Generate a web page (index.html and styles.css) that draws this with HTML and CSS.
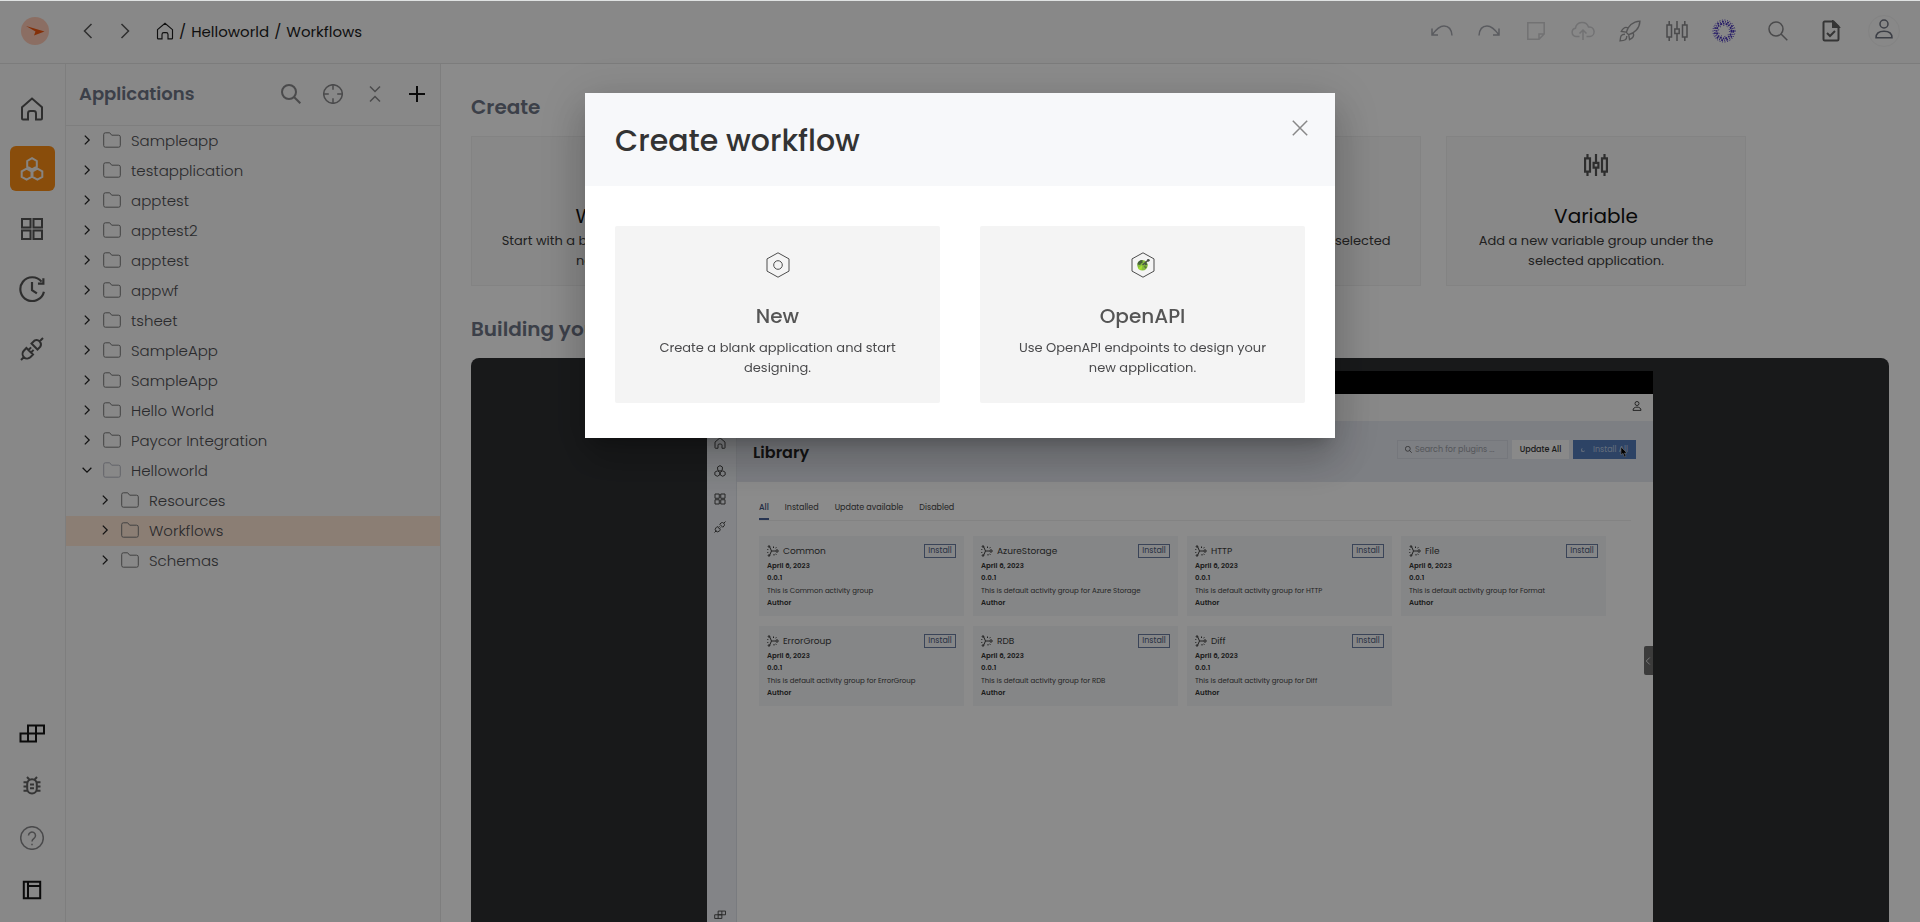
FILE: index.html
```html
<!DOCTYPE html>
<html lang="en">
<head>
<meta charset="utf-8">
<title>Create workflow</title>
<link rel="stylesheet" href="styles.css">
</head>
<body>
<svg class="defs" aria-hidden="true">
  <symbol id="home" viewBox="0 0 24 24"><path d="M2 10.200 12 1.600l10 8.600V21.500a1 1 0 0 1-1 1h-5v-6a2.400 2.400 0 0 0-2.400-2.400h-3.200A2.400 2.400 0 0 0 8 16.500v6H3a1 1 0 0 1-1-1z"/></symbol>
  <symbol id="hexes" viewBox="0 0 24 24"><path d="M12 1.200 16.800 4v5.600L12 12.400 7.200 9.600V4zM6.600 11.600l4.900 2.800v5.400l-4.900 2.800-4.900-2.800v-5.400zM17.400 11.600l4.900 2.800v5.400l-4.900 2.800-4.900-2.800v-5.400z"/></symbol>
  <symbol id="grid" viewBox="0 0 24 24"><path d="M2 2h8.500v8.500H2zM13.500 2H22v8.500h-8.500zM2 13.500h8.500V22H2zM13.500 13.500H22V22h-8.500z"/></symbol>
  <symbol id="history" viewBox="0 0 24 24"><path d="M20.800 5.200A11 11 0 1 0 23 14.500M12 5.500V13l4.500 3M22.500 2v5h-5"/></symbol>
  <symbol id="plug" viewBox="0 0 24 24"><path d="M1 23l3.500-3.500M19.500 4.500 23 1M11.500 6.500l6 6 2.800-2.800a4.400 4.400 0 0 0-6-6zM3.800 13.800 6.400 11l6.600 6.600-2.700 2.700a4.600 4.600 0 0 1-6.500-6.500zM8.500 13l2.600-2.600M11 15.500l2.600-2.600"/></symbol>
  <symbol id="blocks" viewBox="0 0 26 20"><path d="M9 1.500h16v8H9zM1.500 9.500h15.500v8H1.500zM17 1.500v8M9 9.500v8"/></symbol>
  <symbol id="bug" viewBox="0 0 20 20"><path d="M10 3.200c3 0 4.800 2.200 4.800 4.800v4.500c0 3-2 5-4.800 5s-4.800-2-4.800-5V8c0-2.600 1.800-4.800 4.800-4.800zM5 1l2.500 2.700M15 1l-2.500 2.700M1.500 6.300h4M1.500 10.500h4M1.500 14.700h4M14.500 6.300h4M14.500 10.500h4M14.500 14.700h4M8 8.500h4M8 12.300h4"/></symbol>
  <symbol id="help" viewBox="0 0 24 24"><circle cx="12" cy="12" r="11.300"/><path d="M8.500 9.500a3.500 3.500 0 1 1 5.500 2.900c-1.300.9-2 1.500-2 3M12 17.700v1.500"/></symbol>
  <symbol id="layout" viewBox="0 0 20 20"><path d="M1.800 1.800h16.400v16.400H1.800zM6 1.800v16.400M6 6h12.200"/></symbol>
  <symbol id="chev-r" viewBox="0 0 10 16"><path d="m1.500 1 7 7-7 7"/></symbol>
  <symbol id="chev-l" viewBox="0 0 10 16"><path d="m8.500 1-7 7 7 7"/></symbol>
  <symbol id="folder" viewBox="0 0 18 16"><path d="M.7 13.500v-11A1.700 1.700 0 0 1 2.400.8h4.300l2 2.400h6.900a1.700 1.700 0 0 1 1.700 1.700v8.600a1.700 1.700 0 0 1-1.700 1.700H2.400a1.700 1.700 0 0 1-1.700-1.700z"/></symbol>
  <symbol id="search" viewBox="0 0 20 20"><circle cx="8" cy="8" r="7"/><path d="m13 13 6.300 6.300"/></symbol>
  <symbol id="target" viewBox="0 0 20 20"><circle cx="10" cy="10" r="9.300"/><path d="M10 .8v5M10 14.200v5M.8 10h5M14.200 10h5"/></symbol>
  <symbol id="collapse" viewBox="0 0 12 18"><path d="m1 1.500 5 5 5-5M1 16.500l5-5 5 5"/></symbol>
  <symbol id="plus" viewBox="0 0 16 16"><path d="M8 0v16M0 8h16"/></symbol>
  <symbol id="undo" viewBox="0 0 22 12"><path d="M1 3.500V10h6M1 10C6 3 9 1 13 1s7.500 3 8 9.500"/></symbol>
  <symbol id="redo" viewBox="0 0 22 12"><path d="M21 3.500V10h-6M21 10C16 3 13 1 9 1S1.500 4 1 10.500"/></symbol>
  <symbol id="note" viewBox="0 0 18 18"><path d="M.8.8h16.400V12L12 17.200H.8zM12 17V12h5"/></symbol>
  <symbol id="cloud" viewBox="0 0 24 20"><path d="M8.500 15.500H5a4.200 4.200 0 0 1-.5-8.300A6.700 6.700 0 0 1 17.500 6a4.800 4.800 0 0 1 1.500 9.500h-3.500M12 19V9M8.500 12.500 12 9l3.500 3.500"/></symbol>
  <symbol id="rocket" viewBox="0 0 24 24"><path d="M8 13.500C9.500 7 15 1.500 22.800 1.200 22.500 9 17 14.500 10.500 16zM9.800 8.500C6.500 7 4.500 8.500 2.500 12.500l5.300.8M15.500 14.200c1.500 3.300 0 5.300-4 7.300l-.8-5.300M6.500 15.500c-4 0-5 2-5.300 7.300 5.300-.3 7.300-1.300 7.300-5.300"/></symbol>
  <symbol id="sliders" viewBox="0 0 22 20"><path d="M1 4h4.500v12H1zM3.200 0v4M3.200 16v4M8.800 8h4.400v4.400H8.800zM11 0v8M11 12.400V20M16.500 4H21v12h-4.500zM18.800 0v4M18.800 16v4"/></symbol>
  <symbol id="ring" viewBox="0 0 24 24"><circle cx="12" cy="12" r="11" stroke-width="1" stroke-dasharray="1 1.600"/><circle cx="12" cy="12" r="9.300" stroke-width="1.700" stroke-dasharray="1.700 1.300 .8 1.400"/><circle cx="12" cy="12" r="7.400" stroke-width="1.800" stroke-dasharray="1.500 1.200 2 .9"/><circle cx="12" cy="12" r="5.500" stroke-width="1" stroke-dasharray="1 2.500"/></symbol>
  <symbol id="filecheck" viewBox="0 0 18 22"><path d="M1.500 2.700v16.600a1.200 1.200 0 0 0 1.200 1.200h12.600a1.200 1.200 0 0 0 1.200-1.200V6.500l-5-5H2.700a1.200 1.200 0 0 0-1.200 1.200zM5 13l3 3 5-5"/><path class="solid" d="M11 1.500v5.500h5.500z"/></symbol>
  <symbol id="user" viewBox="0 0 18 20"><circle cx="9" cy="5" r="4"/><path d="M1 18.800c0-4.300 3.300-6.600 8-6.600s8 2.300 8 6.600z"/></symbol>
  <symbol id="hexnut" viewBox="0 0 24 26"><path d="M12 .8 23 6.900v12.200L12 25.200 1 19.100V6.900z"/><circle cx="12" cy="13" r="4.300"/></symbol>
  <symbol id="hexapi" viewBox="0 0 24 26"><path d="M12 .8 23 6.900v12.200L12 25.200 1 19.100V6.900z"/><g stroke="none"><circle cx="11.500" cy="13.200" r="5.200" fill="#86bd3c"/><path d="M6.300 12.500A5.200 5.200 0 0 1 11.500 8v3a2.200 2.200 0 0 0-2.200 2zM14.500 9.500l2 3.200-3 .7z" fill="#46603a"/><path d="m8 15.500 3.500-2.500-1 5-3.500-1z" fill="#a4e02c"/><path d="m12.500 14 3.500.8-1.500 2z" fill="#56733c"/><circle cx="17.300" cy="8.300" r="1.400" fill="#4a4f4a"/></g><path d="m11.500 13 6-5" stroke="#4a4f4a" stroke-width="1.300"/></symbol>
  <symbol id="close" viewBox="0 0 16 16"><path d="m.8.8 14.400 14.400M15.200.8.800 15.200"/></symbol>
  <symbol id="nodes" viewBox="0 0 12 12"><path d="M2.500 1.500 4.500 6l-2 4.500M4.500 6h4"/><circle cx="10" cy="6" r="1.200"/><circle cx="2" cy="1.500" r=".8"/><circle cx="2" cy="10.500" r=".8"/><path d="M6.500 1.500v1.500M7 9v1.500M.8 4v1M.8 7v1M9.500 2.500l-1 .5M9.500 9.500l-1-.5"/></symbol>
</svg>

<div class="app">
  <header class="topbar">
    <svg class="logo" viewBox="0 0 28 28" role="img" aria-label="Logo"><circle cx="14" cy="14" r="14" fill="#fdc9b4"/><path d="M5 9l18.500 5.500-10.500 4 1.500-4z" fill="#f0560f"/></svg>
    <nav class="crumbs" aria-label="Breadcrumb">
      <button class="ico step" aria-label="Back"><svg class="i-chev"><use href="#chev-l"/></svg></button>
      <button class="ico step" aria-label="Forward"><svg class="i-chev"><use href="#chev-r"/></svg></button>
      <a href="#" class="crumb-home" aria-label="Home"><svg class="i18"><use href="#home"/></svg></a>
      <span>/</span><a href="#">Helloworld</a><span>/</span><a href="#">Workflows</a>
    </nav>
    <div class="tools">
      <div class="edit-tools">
        <button class="ico faint" aria-label="Undo"><svg class="i-wide"><use href="#undo"/></svg></button>
        <button class="ico faint" aria-label="Redo"><svg class="i-wide"><use href="#redo"/></svg></button>
        <button class="ico fainter" aria-label="Note"><svg class="i18"><use href="#note"/></svg></button>
        <button class="ico fainter" aria-label="Publish"><svg class="i24"><use href="#cloud"/></svg></button>
        <button class="ico grey" aria-label="Deploy"><svg class="i22"><use href="#rocket"/></svg></button>
        <button class="ico mid" aria-label="Variables"><svg class="i22"><use href="#sliders"/></svg></button>
        <button class="ico violet" aria-label="Assistant"><svg class="i24"><use href="#ring"/></svg></button>
      </div>
      <div class="user-tools">
        <button class="ico mid" aria-label="Search"><svg class="i20"><use href="#search"/></svg></button>
        <button class="ico bold" aria-label="Tasks"><svg class="i22"><use href="#filecheck"/></svg></button>
        <button class="ico slate" aria-label="Account"><svg class="i20"><use href="#user"/></svg></button>
      </div>
    </div>
  </header>

  <div class="body">
    <nav class="rail" aria-label="Main">
      <div class="rail-top">
        <a href="#" aria-label="Home"><svg class="i24"><use href="#home"/></svg></a>
        <a href="#" class="active" aria-label="Applications"><svg class="i24"><use href="#hexes"/></svg></a>
        <a href="#" aria-label="Library"><svg class="i24"><use href="#grid"/></svg></a>
        <a href="#" aria-label="History"><svg class="i26"><use href="#history"/></svg></a>
        <a href="#" aria-label="Connections"><svg class="i24"><use href="#plug"/></svg></a>
      </div>
      <div class="rail-bottom">
        <button class="ico black" aria-label="Blocks"><svg class="i26"><use href="#blocks"/></svg></button>
        <button class="ico bold" aria-label="Debug"><svg class="i20"><use href="#bug"/></svg></button>
        <button class="ico mid" aria-label="Help"><svg class="i24"><use href="#help"/></svg></button>
        <button class="ico black" aria-label="Layout"><svg class="i20"><use href="#layout"/></svg></button>
      </div>
    </nav>

    <aside class="panel">
      <div class="panel-head">
        <h2>Applications</h2>
        <div class="panel-tools">
          <button class="ico glass" aria-label="Search"><svg class="i20"><use href="#search"/></svg></button>
          <button class="ico mid" aria-label="Locate"><svg class="i20"><use href="#target"/></svg></button>
          <button class="ico mid" aria-label="Collapse"><svg class="i18"><use href="#collapse"/></svg></button>
          <button class="ico black" aria-label="Add"><svg class="i16"><use href="#plus"/></svg></button>
        </div>
      </div>
      <ul class="tree">
        <li><svg class="arrow"><use href="#chev-r"/></svg><svg class="folder"><use href="#folder"/></svg>Sampleapp</li>
        <li><svg class="arrow"><use href="#chev-r"/></svg><svg class="folder"><use href="#folder"/></svg>testapplication</li>
        <li><svg class="arrow"><use href="#chev-r"/></svg><svg class="folder"><use href="#folder"/></svg>apptest</li>
        <li><svg class="arrow"><use href="#chev-r"/></svg><svg class="folder"><use href="#folder"/></svg>apptest2</li>
        <li><svg class="arrow"><use href="#chev-r"/></svg><svg class="folder"><use href="#folder"/></svg>apptest</li>
        <li><svg class="arrow"><use href="#chev-r"/></svg><svg class="folder"><use href="#folder"/></svg>appwf</li>
        <li><svg class="arrow"><use href="#chev-r"/></svg><svg class="folder"><use href="#folder"/></svg>tsheet</li>
        <li><svg class="arrow"><use href="#chev-r"/></svg><svg class="folder"><use href="#folder"/></svg>SampleApp</li>
        <li><svg class="arrow"><use href="#chev-r"/></svg><svg class="folder"><use href="#folder"/></svg>SampleApp</li>
        <li><svg class="arrow"><use href="#chev-r"/></svg><svg class="folder"><use href="#folder"/></svg>Hello World</li>
        <li><svg class="arrow"><use href="#chev-r"/></svg><svg class="folder"><use href="#folder"/></svg>Paycor Integration</li>
        <li class="open"><svg class="arrow"><use href="#chev-r"/></svg><svg class="folder"><use href="#folder"/></svg>Helloworld</li>
        <li class="child"><svg class="arrow"><use href="#chev-r"/></svg><svg class="folder"><use href="#folder"/></svg>Resources</li>
        <li class="child selected"><svg class="arrow"><use href="#chev-r"/></svg><svg class="folder"><use href="#folder"/></svg>Workflows</li>
        <li class="child"><svg class="arrow"><use href="#chev-r"/></svg><svg class="folder"><use href="#folder"/></svg>Schemas</li>
      </ul>
    </aside>

    <main class="main">
      <h2>Create</h2>
      <div class="create">
        <button class="tile"><svg class="i24"><use href="#hexnut"/></svg><strong>Workflow</strong><span>Start with a blank canvas to create a<br>new workflow.</span></button>
        <div class="tile"></div>
        <button class="tile"><svg class="i24"><use href="#folder"/></svg><strong>Schema</strong><span>Add new schema under the selected<br>application.</span></button>
        <button class="tile"><svg class="i24"><use href="#sliders"/></svg><strong>Variable</strong><span>Add a new variable group under the<br>selected application.</span></button>
      </div>
      <h2>Building your workflow</h2>
      <div class="video">
        <div class="screen">
          <div class="screen-black"></div>
          <div class="screen-top"><svg class="i10"><use href="#user"/></svg></div>
          <div class="screen-body">
            <div class="mini-rail">
              <svg class="i12"><use href="#home"/></svg>
              <svg class="i12"><use href="#hexes"/></svg>
              <svg class="i12"><use href="#grid"/></svg>
              <svg class="i12"><use href="#plug"/></svg>
              <svg class="i12 last"><use href="#blocks"/></svg>
            </div>
            <div class="lib">
              <div class="lib-head">
                <h3>Library</h3>
                <label class="mini-search"><svg class="i7"><use href="#search"/></svg><input type="text" placeholder="Search for plugins ..." aria-label="Search for plugins"></label>
                <button class="update">Update All</button>
                <button class="install-all"><i></i>Install All<svg class="cursor" viewBox="0 0 8 10"><path d="M1 0v8l2-1.700L4.500 10 6 9.300 4.500 6H7z" fill="#000" stroke="#ddd" stroke-width=".5"/></svg></button>
              </div>
              <div class="tabs"><a href="#" class="on">All</a><a href="#">Installed</a><a href="#">Update available</a><a href="#">Disabled</a></div>
              <div class="plugins">
                <article><header><svg class="i12"><use href="#nodes"/></svg><h4>Common</h4><button>Install</button></header><b>April 6, 2023</b><b>0.0.1</b><p>This is Common activity group</p><b>Author</b></article>
                <article><header><svg class="i12"><use href="#nodes"/></svg><h4>AzureStorage</h4><button>Install</button></header><b>April 6, 2023</b><b>0.0.1</b><p>This is default activity group for Azure Storage</p><b>Author</b></article>
                <article><header><svg class="i12"><use href="#nodes"/></svg><h4>HTTP</h4><button>Install</button></header><b>April 6, 2023</b><b>0.0.1</b><p>This is default activity group for HTTP</p><b>Author</b></article>
                <article><header><svg class="i12"><use href="#nodes"/></svg><h4>File</h4><button>Install</button></header><b>April 6, 2023</b><b>0.0.1</b><p>This is default activity group for Format</p><b>Author</b></article>
                <article><header><svg class="i12"><use href="#nodes"/></svg><h4>ErrorGroup</h4><button>Install</button></header><b>April 6, 2023</b><b>0.0.1</b><p>This is default activity group for ErrorGroup</p><b>Author</b></article>
                <article><header><svg class="i12"><use href="#nodes"/></svg><h4>RDB</h4><button>Install</button></header><b>April 6, 2023</b><b>0.0.1</b><p>This is default activity group for RDB</p><b>Author</b></article>
                <article><header><svg class="i12"><use href="#nodes"/></svg><h4>Diff</h4><button>Install</button></header><b>April 6, 2023</b><b>0.0.1</b><p>This is default activity group for Diff</p><b>Author</b></article>
              </div>
            </div>
            <button class="drawer" aria-label="Expand"><svg class="i8"><use href="#chev-l"/></svg></button>
          </div>
        </div>
      </div>
    </main>
  </div>
</div>

<div class="overlay">
  <section class="modal" role="dialog" aria-labelledby="dlg">
    <header>
      <h1 id="dlg">Create workflow</h1>
      <button class="ico close" aria-label="Close"><svg class="i16"><use href="#close"/></svg></button>
    </header>
    <div class="choices">
      <button class="choice"><svg class="i26"><use href="#hexnut"/></svg><strong>New</strong><span>Create a blank application and start<br>designing.</span></button>
      <button class="choice"><svg class="i26"><use href="#hexapi"/></svg><strong>OpenAPI</strong><span>Use OpenAPI endpoints to design your<br>new application.</span></button>
    </div>
  </section>
</div>
</body>
</html>
```
FILE: styles.css
```css
* { box-sizing: border-box; }
html, body { height: 100%; }
body {
  margin: 0;
  border-top: 1px solid #dfe2e2;
  overflow: hidden;
  font-family: Poppins, Inter, "Open Sans", sans-serif;
  font-size: 15px;
  color: #4e4e52;
  background: #fdfdfd;
}
h1, h2, h3, h4, p, ul { margin: 0; padding: 0; }
h2 { font-size: 20px; line-height: 30px; font-weight: 600; color: #6e7586; }
a { color: inherit; text-decoration: none; }
button, input { font: inherit; color: inherit; border: 0; background: none; padding: 0; }
.defs { position: absolute; width: 0; height: 0; }

svg { fill: none; stroke: currentColor; stroke-width: 1.5; flex: none; display: block; }
.logo path, .logo circle { stroke: none; }
.solid { fill: currentColor; }
.i7 { width: 7px; height: 7px; }
.i8 { width: 8px; height: 8px; }
.i10 { width: 10px; height: 10px; }
.i12 { width: 12px; height: 12px; }
.i16 { width: 16px; height: 16px; }
.i18 { width: 18px; height: 18px; }
.i20 { width: 20px; height: 20px; }
.i22 { width: 22px; height: 22px; }
.i24 { width: 24px; height: 24px; }
.i26 { width: 26px; height: 26px; }
.i-wide { width: 22px; height: 12px; }
.i-chev { width: 10px; height: 16px; }

.ico { width: 32px; height: 32px; display: grid; place-items: center; }
.fainter { color: #cfcfd2; }
.faint { color: #a4a6ae; }
.grey { color: #9a9a9c; }
.mid { color: #88888a; }
.bold { color: #626262; }
.bold svg { stroke-width: 2; }
.slate { color: #6e7380; border: 1px solid #eeeeee; border-radius: 50%; padding-bottom: 4px; }
.violet { color: #4632bc; }
.black { color: #141414; }
.black svg { stroke-width: 2; }
.glass { color: #88888a; }
.glass svg { stroke-width: 2; }

.app { height: 100%; display: flex; flex-direction: column; }
.topbar {
  height: 63px;
  flex: none;
  display: flex;
  align-items: center;
  padding: 0 20px 2px 21px;
  background: #f7f7f7;
  border-bottom: 1px solid #e2e2e2;
}
.logo { width: 28px; height: 28px; }
.crumbs { display: flex; align-items: center; gap: 5px; margin-left: 23px; color: #1c1c1c; }
.step { color: #555555; }
.crumb-home { margin-left: 10px; }
.tools, .edit-tools, .user-tools { display: flex; align-items: center; }
.tools { margin-left: auto; gap: 22px; }
.edit-tools { gap: 15px; }
.user-tools { gap: 21px; }

.body { flex: 1; min-height: 0; display: flex; }
.rail {
  width: 66px;
  flex: none;
  display: flex;
  flex-direction: column;
  justify-content: space-between;
  align-items: center;
  padding: 22px 1px 16px 0;
  background: #f7f7f7;
  border-right: 1px solid #e6e6e6;
}
.rail-top, .rail-bottom { display: flex; flex-direction: column; align-items: center; gap: 15px; }
.rail-bottom { gap: 20px; }
.rail-top a {
  width: 45px;
  height: 45px;
  display: grid;
  place-items: center;
  border-radius: 6px;
  color: #555555;
}
.rail-top svg { stroke-width: 2; }
.rail-top .active { background: #fa8d14; color: #f6f0ea; }

.panel { width: 375px; flex: none; background: #f7f7f7; border-right: 1px solid #e6e6e6; }
.panel-head {
  height: 62px;
  display: flex;
  align-items: center;
  justify-content: space-between;
  padding: 0 7px 2px 13px;
  border-bottom: 1px solid #e6e6e6;
}
.panel-head h2 { font-size: 18px; }
.panel-tools { display: flex; gap: 10px; }
.tree { list-style: none; font-weight: 300; }
.tree li { height: 30px; display: flex; align-items: center; padding: 0 17px 2px; }
.tree .child { padding-left: 35px; }
.tree .selected { background: #fde5d3; }
.arrow { width: 8px; height: 10px; margin-right: 12px; color: #222222; stroke-width: 2; }
.open .arrow { transform: rotate(90deg); }
.folder { width: 18px; height: 16px; margin-right: 10px; color: #7a7a7a; stroke-width: 1; }
.open .folder { color: #b4b6c0; }

.main { flex: 1; min-width: 0; display: flex; flex-direction: column; padding: 28px 31px 0 30px; }
.create { display: grid; grid-template-columns: repeat(4, 300px); gap: 25px; margin: 14px 0 28px; }
.tile {
  height: 150px;
  display: flex;
  flex-direction: column;
  align-items: center;
  padding-top: 16px;
  background: #f8f8f8;
  border: 1px solid #eeeeee;
  color: #3c3c3c;
}
.tile svg { stroke-width: 2; color: #555555; }
.tile strong, .choice strong { font-weight: 400; font-size: 20px; line-height: 30px; }
.tile strong { color: #111111; margin-top: 24px; }
.tile span, .choice span { font-size: 13px; line-height: 20px; text-align: center; }

.video {
  flex: 1;
  min-height: 0;
  margin-top: 14px;
  padding: 13px 236px 0 236px;
  background: #2d2f31;
  border-radius: 8px 8px 0 0;
  display: flex;
}
.screen {
  flex: 1;
  min-width: 0;
  display: flex;
  flex-direction: column;
  background: #fdfdfd;
  font-size: 7px;
  color: #444444;
}
.screen svg { stroke-width: 2; }
.screen-black { height: 23px; flex: none; background: #000000; }
.screen-top { height: 27px; flex: none; display: flex; justify-content: flex-end; align-items: center; padding: 0 11px 4px 0; background: #f8f8f8; }
.screen-body { flex: 1; min-height: 0; display: flex; position: relative; }
.mini-rail {
  width: 30px;
  flex: none;
  display: flex;
  flex-direction: column;
  align-items: center;
  gap: 16px;
  padding: 16px 4px 1px 0;
  background: #eef1f6;
  border-right: 1px solid #dde1e8;
}
.mini-rail .last { margin-top: auto; }
.lib { flex: 1; min-width: 0; }
.lib-head { height: 61px; display: flex; align-items: center; padding: 0 17px 4px 16px; background: #e4e7ef; }
.lib-head h3 { flex: 1; font-size: 16px; line-height: 20px; font-weight: 600; color: #222222; padding-top: 6px; }
.lib-head button { height: 19px; font-weight: 500; font-size: 8px; }
.mini-search { width: 111px; height: 19px; display: flex; align-items: center; gap: 3px; padding: 0 7px; margin-right: 4px; border: 1px solid #d5d9e2; }
.mini-search input { min-width: 0; flex: 1; font-size: 8px; line-height: 12px; outline: 0; }
.mini-search input::placeholder { color: #9a9da5; }
.update { width: 57px; margin-right: 4px; background: #fafafa; color: #333333; }
.lib-head .install-all { width: 63px; display: flex; align-items: center; justify-content: center; gap: 8px; position: relative; background: #527ab8; color: #b9c8e0; font-weight: 400; }
.install-all i { width: 4px; height: 4px; border-left: 1px solid; border-bottom: 1px solid; border-radius: 50%; }
.install-all .cursor { position: absolute; right: 8px; top: 7px; width: 8px; height: 10px; }
.tabs { display: flex; gap: 16px; margin: 0 22px; padding-top: 18px; height: 39px; border-bottom: 1px solid #eeeeee; font-size: 8px; line-height: 16px; }
.tabs .on { color: #3c4f7a; font-weight: 500; border-bottom: 2px solid #4a6296; }
.plugins { display: grid; grid-template-columns: repeat(4, 205px); gap: 10px 9px; padding: 15px 22px; }
.plugins article { height: 80px; padding: 8px; background: #f2f4f6; display: flex; flex-direction: column; }
.plugins header { display: flex; align-items: center; gap: 4px; height: 14px; margin-bottom: 2px; color: #3c3c3c; }
.plugins h4 { flex: 1; font-size: 9px; font-weight: 400; }
.plugins header svg { stroke-width: 1; }
.plugins button { width: 32px; height: 14px; border: 1px solid #6b7ca0; color: #4b5a7c; font-size: 8px; line-height: 12px; font-weight: 400; }
.plugins b, .plugins p { font-size: 7px; line-height: 12px; }
.plugins b { font-weight: 600; color: #333333; }
.plugins p { padding-top: 1px; }
.drawer { position: absolute; right: 0; top: 225px; width: 9px; height: 29px; background: #6c6c6c; color: #d8d8d8; border-radius: 2px 0 0 2px; }

.overlay {
  position: fixed;
  inset: 1px 0 0;
  background: rgba(0, 0, 0, 0.45);
  display: flex;
  justify-content: center;
  align-items: flex-start;
  padding-top: 92px;
}
.modal {
  width: 750px;
  background: #ffffff;
  box-shadow: 0 11px 15px -7px rgba(0, 0, 0, 0.2), 0 24px 38px 3px rgba(0, 0, 0, 0.14), 0 9px 46px 8px rgba(0, 0, 0, 0.12);
}
.modal header {
  height: 93px;
  display: flex;
  justify-content: space-between;
  align-items: flex-start;
  padding: 19px 19px 0 30px;
  background: #f7f8fa;
}
.modal h1 { font-size: 30px; line-height: 58px; font-weight: 500; color: #333333; }
.close { color: #888888; }
.choices { display: grid; grid-template-columns: 1fr 1fr; gap: 40px; padding: 40px 30px 35px; }
.choice {
  height: 177px;
  display: flex;
  flex-direction: column;
  align-items: center;
  padding-top: 26px;
  background: #f4f4f4;
  border-radius: 2px;
  color: #4a4a4c;
}
.choice svg { stroke-width: 1; color: #4d4d4d; }
.choice strong { margin: 23px 0 7px; color: #555555; font-weight: 500; }
```
